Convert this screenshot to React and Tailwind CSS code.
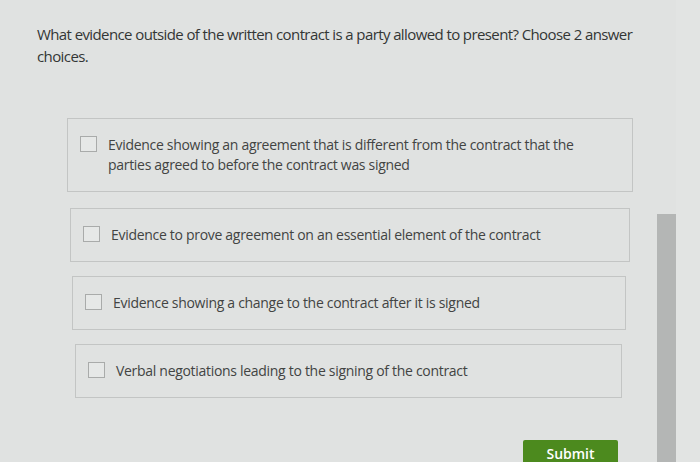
export default function App() {
  const opts = [
    { t: "Evidence showing an agreement that is different from the contract that the parties agreed to before the contract was signed", m: "ml-[67px] mr-[24px]", w: "w-[490px]" },
    { t: "Evidence to prove agreement on an essential element of the contract", m: "ml-[70px] mr-[27px] mt-[16px]", w: "" },
    { t: "Evidence showing a change to the contract after it is signed", m: "ml-[72px] mr-[31px] mt-[14px]", w: "" },
    { t: "Verbal negotiations leading to the signing of the contract", m: "ml-[75px] mr-[35px] mt-[14px]", w: "" },
  ];
  return (
    <div className="w-[700px] h-[462px] overflow-hidden bg-[#e0e2e1] flex" style={{ fontFamily: '"Open Sans", sans-serif' }}>
      <div className="w-[657px] flex flex-col">
        <div className="pl-[37px] pr-[20px] pt-[23px] text-[15px] leading-[22px] text-[#333635] tracking-[-0.6px]">
          What evidence outside of the written contract is a party allowed to present? Choose 2 answer choices.
        </div>
        <div className="mt-[51px] flex flex-col">
          {opts.map((o, i) => (
            <div key={i} className={`${o.m} border border-[#c3c5c4] py-[16px] pl-[12px] flex items-start gap-[11px]`}>
              <div className="w-[17px] h-[16px] mt-[1px] border border-[#a9abaa] bg-[#e6e8e7] shrink-0" />
              <div className={`text-[14px] leading-[20px] tracking-[-0.3px] text-[#424443] ${o.w}`}>{o.t}</div>
            </div>
          ))}
        </div>
        <div className="flex justify-end pr-[39px] mt-[42px]">
          <div className="w-[95px] h-[30px] bg-[#4c8a1e] rounded-[2px] text-white text-[14px] leading-[18px] font-semibold text-center pt-[5px]">
            Submit
          </div>
        </div>
      </div>
      <div className="w-[19px] pt-[214px]">
        <div className="h-full bg-[#b4b6b5]" />
      </div>
      <div className="flex-1 bg-[#e2e4e3]" />
    </div>
  );
}
